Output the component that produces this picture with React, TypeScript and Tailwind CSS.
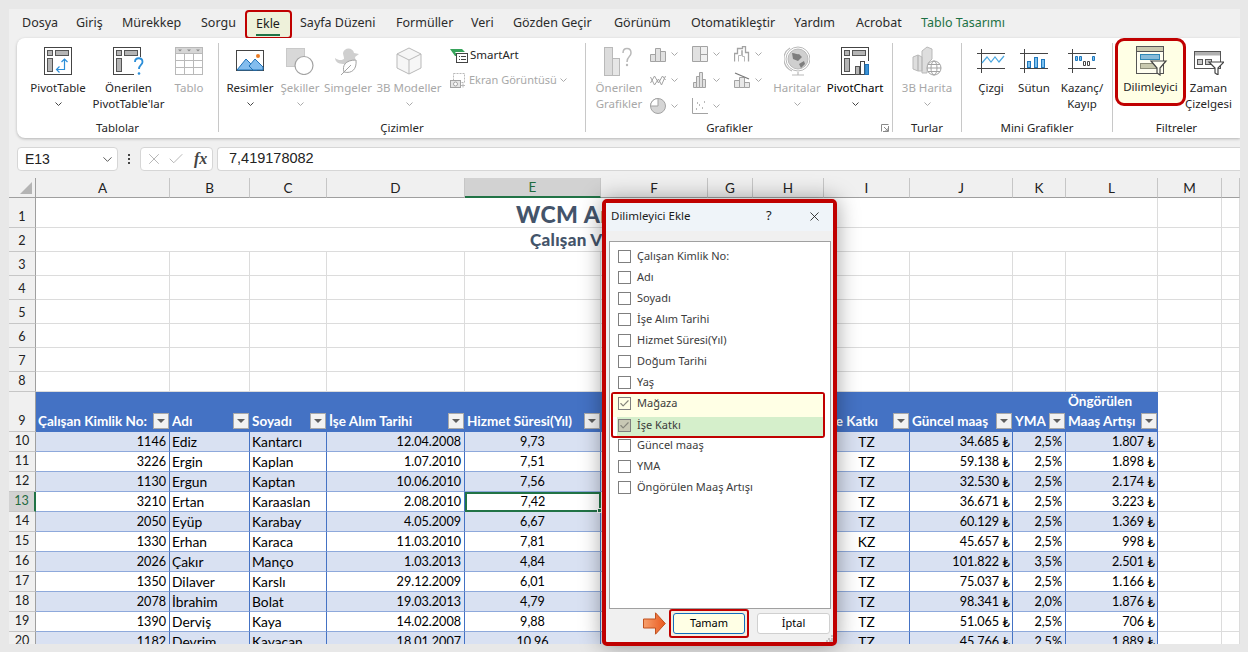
import { ReactNode } from "react"
import { Check, ChevronDown, X } from "lucide-react"

const ui = "font-['Noto_Sans',sans-serif]"
const sheet = "font-['Lato',sans-serif]"
const GRID = "grid grid-cols-[27px_134px_80px_77px_138px_136px_107px_45px_71px_86px_103px_53px_92px_64px_18px]"

const tabs = [
  { label: "Dosya", w: "w-[54px]" },
  { label: "Giriş", w: "w-[46px]" },
  { label: "Mürekkep", w: "w-[79px]" },
  { label: "Sorgu", w: "w-[44px]" },
]
const tabs2 = [
  { label: "Sayfa Düzeni", w: "w-[96px]" },
  { label: "Formüller", w: "w-[75px]" },
  { label: "Veri", w: "w-[42px]" },
  { label: "Gözden Geçir", w: "w-[101px]" },
  { label: "Görünüm", w: "w-[77px]" },
  { label: "Otomatikleştir", w: "w-[103px]" },
  { label: "Yardım", w: "w-[62px]" },
  { label: "Acrobat", w: "w-[65px]" },
]

const rows = [
  ["1146", "Ediz", "Kantarcı", "12.04.2008", "9,73", "TZ", "34.685", "2,5%", "1.807"],
  ["3226", "Ergin", "Kaplan", "1.07.2010", "7,51", "TZ", "59.138", "2,5%", "1.898"],
  ["1130", "Ergun", "Kaptan", "10.06.2010", "7,56", "TZ", "32.530", "2,5%", "2.174"],
  ["3210", "Ertan", "Karaaslan", "2.08.2010", "7,42", "TZ", "36.671", "2,5%", "3.223"],
  ["2050", "Eyüp", "Karabay", "4.05.2009", "6,67", "TZ", "60.129", "2,5%", "1.369"],
  ["1330", "Erhan", "Karaca", "11.03.2010", "7,81", "KZ", "45.657", "2,5%", "998"],
  ["2026", "Çakır", "Manço", "1.03.2013", "4,84", "TZ", "101.822", "3,5%", "2.501"],
  ["1350", "Dilaver", "Karslı", "29.12.2009", "6,01", "TZ", "75.037", "2,5%", "1.166"],
  ["2078", "İbrahim", "Bolat", "19.03.2013", "4,79", "TZ", "98.341", "2,0%", "1.876"],
  ["1390", "Derviş", "Kaya", "14.02.2008", "9,88", "TZ", "51.065", "2,5%", "706"],
  ["1182", "Devrim", "Kayacan", "18.01.2007", "10,96", "TZ", "45.766", "2,5%", "1.889"],
]

const fields = [
  "Çalışan Kimlik No:",
  "Adı",
  "Soyadı",
  "İşe Alım Tarihi",
  "Hizmet Süresi(Yıl)",
  "Doğum Tarihi",
  "Yaş",
]

const GREY = "#b9b9b9"
const GREYD = "#a3a3a3"

function Ico({ w = 28, h = 28, children }: { w?: number; h?: number; children: ReactNode }) {
  return (
    <svg width={w} height={h} viewBox={`0 0 ${w} ${h}`} fill="none" className="block shrink-0">
      {children}
    </svg>
  )
}

function Chev({ color = "#444" }: { color?: string }) {
  return (
    <svg width="7" height="4" viewBox="0 0 7 4" fill="none" className="block shrink-0">
      <path d="M.5.5l3 3 3-3" stroke={color} />
    </svg>
  )
}

function PivotBase() {
  return (
    <>
      <rect x=".5" y=".5" width="27" height="27" fill="#fff" stroke="#444" />
      <rect x="3.5" y="3.5" width="5" height="5" fill="#b5b5b5" stroke="#555" />
      <rect x="11.5" y="3.5" width="13" height="5" fill="#b5b5b5" stroke="#555" />
      <rect x="3.5" y="11.5" width="5" height="13" fill="#b5b5b5" stroke="#555" />
    </>
  )
}

const icons: Record<string, ReactNode> = {
  pivot: (
    <Ico>
      <PivotBase />
      <path d="M20.5 12v10.5H13M17.5 15l3-3 3 3M15.5 19.5l-3 3 3 3" stroke="#2b8ed8" strokeWidth="1.2" />
    </Ico>
  ),
  pivotQ: (
    <Ico w={32}>
      <PivotBase />
      <rect x="21" y="10" width="11" height="18" fill="#fff" />
      <path d="M22 15c0-5 7.500-5 7.500 0 0 3-3.500 3-3.500 7" stroke="#2b8ed8" strokeWidth="1.8" />
      <circle cx="26" cy="26.500" r="1.300" fill="#2b8ed8" />
    </Ico>
  ),
  table: (
    <Ico>
      <rect x=".5" y=".5" width="27" height="27" fill="#fff" stroke={GREY} />
      <rect x="1" y="1" width="26" height="5" fill="#d6d6d6" />
      <path d="M.5 6.500h27M.5 13.500h27M.5 20.500h27M9.500 6.500v21M18.500 6.500v21" stroke={GREY} />
      <path d="M3 2.500h4l-2 2zM12 2.500h4l-2 2zM21 2.500h4l-2 2z" fill="#8c8c8c" />
    </Ico>
  ),
  image: (
    <Ico>
      <rect x=".5" y="3.500" width="27" height="20" fill="#fff" stroke="#444" />
      <path d="M1 23l9-11 11 11z" fill="#83bdee" stroke="#1f72b8" />
      <path d="M13 19l6-7 8 8v3H17z" fill="#83bdee" stroke="#1f72b8" />
      <circle cx="22" cy="9" r="2" fill="#ea7c25" />
    </Ico>
  ),
  shapes: (
    <Ico>
      <rect x=".5" y="1.500" width="18" height="18" fill="#d8d8d8" stroke="#c9c9c9" />
      <circle cx="18" cy="18.500" r="9" fill="#fff" stroke={GREYD} strokeWidth="1.200" />
    </Ico>
  ),
  icons: (
    <Ico>
      <path d="M1 11c4 3 7 2 9 1 0-3-1-4-1-6 1-6 10-6 11 0l5 1-4 3c1 3-1 6-3 7H9c-5 0-8-3-8-6z" fill="#cfcfcf" />
      <path d="M10 25c-2-6 1-12 12-12 1 9-4 14-12 12z" fill="#fff" stroke={GREYD} />
      <path d="M7 28l10-10" stroke={GREYD} />
    </Ico>
  ),
  cube: (
    <Ico>
      <path d="M14 1l12 6v14l-12 6-12-6V7z" fill="#f6f6f6" stroke={GREY} />
      <path d="M2 7l12 6 12-6M14 13v14" stroke={GREY} />
    </Ico>
  ),
  recChart: (
    <Ico w={30} h={29}>
      <rect x=".5" y=".5" width="8" height="28" fill="#dcdcdc" stroke={GREY} />
      <rect x="8.500" y="11.500" width="7" height="17" fill="#e6e6e6" stroke={GREY} />
      <path d="M19 6c0-6 8-6 8 0 0 4-4 3-4 9" stroke={GREY} strokeWidth="1.500" />
      <circle cx="23" cy="18" r="1.200" fill={GREY} />
    </Ico>
  ),
  globe: (
    <Ico w={26} h={30}>
      <circle cx="14" cy="13" r="10" fill="#cfcfcf" stroke={GREY} />
      <path d="M8 7c4 0 5 2 7 1l3 3-4 4-5-2zM15 18l5-3 1 3-4 4z" fill="#7e7e7e" />
      <path d="M6 2a13 13 0 0 0 2 23M14 26v3M8 29h12" stroke={GREY} strokeWidth="1.200" />
      <circle cx="14" cy="13" r="12" stroke={GREY} />
    </Ico>
  ),
  pivotChart: (
    <Ico>
      <PivotBase />
      <rect x="14" y="14" width="14" height="14" fill="#fff" />
      <rect x="14.500" y="19.500" width="4" height="8" fill="#b5b5b5" stroke="#555" />
      <rect x="19.500" y="14.500" width="4" height="13" fill="#fff" stroke="#444" />
      <rect x="24" y="17.500" width="3.500" height="10" fill="#3d95d8" stroke="#1f72b8" />
    </Ico>
  ),
  map3d: (
    <Ico w={30} h={30}>
      <path d="M1 11l5-2v16l-5-2zM6 9l4 2v14l-4 0zM10 5l5-4 5 2v10l-4 4-1 10h-5z" fill="#dedede" stroke={GREY} />
      <circle cx="22" cy="22" r="7" fill="#fff" stroke={GREYD} />
      <ellipse cx="22" cy="22" rx="3" ry="7" stroke={GREYD} />
      <path d="M15 22h14M16 18.500h12M16 25.500h12" stroke={GREYD} />
    </Ico>
  ),
  line: (
    <Ico h={24}>
      <path d="M0 4.500h28M0 19.500h28M4.500 0v24" stroke="#444" />
      <path d="M5 14l5-6 4 5 4-5 4 5 5-6" stroke="#4aa7e0" strokeWidth="1.200" />
    </Ico>
  ),
  column: (
    <Ico h={24}>
      <path d="M0 4.500h28M0 19.500h28M4.500 0v24" stroke="#444" />
      <rect x="7.500" y="12.500" width="3" height="6" fill="#7cc0ee" stroke="#1f78bd" />
      <rect x="14.500" y="8.500" width="3" height="10" fill="#7cc0ee" stroke="#1f78bd" />
      <rect x="21.500" y="10.500" width="3" height="8" fill="#7cc0ee" stroke="#1f78bd" />
    </Ico>
  ),
  winloss: (
    <Ico h={24}>
      <path d="M0 4.500h28M0 19.500h28M4.500 0v24" stroke="#444" />
      <path d="M7.500 7.500h2v4h-2zM11.500 7.500h2v4h-2zM24.500 7.500h2v4h-2z" fill="#7cc0ee" stroke="#1f78bd" />
      <path d="M15.500 12.500h2v4h-2zM19.500 12.500h2v4h-2z" fill="#fff" stroke="#444" />
    </Ico>
  ),
  slicer: (
    <Ico w={32} h={30}>
      <rect x=".5" y=".5" width="27" height="27" fill="#fffef0" stroke="#555" />
      <rect x="1" y="1" width="26" height="4" fill="#c9c9ae" />
      <path d="M.5 5.500h27" stroke="#555" />
      <rect x="4.500" y="8.500" width="19" height="5" fill="#88bbd8" stroke="#2f87b5" />
      <rect x="4.500" y="17.500" width="19" height="5" fill="#c9c9ae" stroke="#8c8c78" />
      <path d="M15 15h15l-6 7v7l-3-2v-5z" fill="#fffef0" stroke="#444" strokeWidth="1.200" />
    </Ico>
  ),
  timeline: (
    <Ico w={30} h={24}>
      <rect x=".5" y=".5" width="26" height="17" fill="#fff" stroke="#555" />
      <rect x="1" y="1" width="25" height="3.500" fill="#b0b0b0" />
      <rect x="3.500" y="8.500" width="5" height="5" fill="#c8c8c8" stroke="#555" />
      <rect x="11.500" y="8.500" width="6" height="5" fill="#c8c8c8" stroke="#555" />
      <path d="M15 11h15l-6 6v7l-3-2v-5z" fill="#fff" stroke="#444" strokeWidth="1.200" />
    </Ico>
  ),
  smartart: (
    <Ico w={18} h={15}>
      <path d="M0 1h12l3 3H5l3 4-3 0z" fill="#37a35b" />
      <rect x="6.500" y="5.500" width="11" height="9" fill="#fff" stroke="#444" />
      <path d="M9 8.500h1M11 8.500h5M9 11.500h1M11 11.500h5" stroke="#444" />
    </Ico>
  ),
  screenshot: (
    <Ico w={16} h={15}>
      <rect x="3.500" y=".5" width="11" height="9" stroke={GREY} strokeDasharray="2 1" />
      <rect x=".5" y="7.500" width="10" height="7" fill="#e5e5e5" stroke={GREYD} />
      <circle cx="5.500" cy="11" r="2" fill="#fff" stroke={GREYD} />
      <path d="M11 12.500h4M13 10.500v4" stroke={GREY} />
    </Ico>
  ),
}

const small: Record<string, ReactNode> = {
  bars: (
    <Ico w={16} h={16}>
      <path d="M.5 8.500h5v7h-5zM5.500 2.500h5v13h-5zM10.500 5.500h5v10h-5z" fill="#e1e1e1" stroke={GREYD} />
    </Ico>
  ),
  lines: (
    <Ico w={16} h={16}>
      <path d="M.5 11l4-7 4 7 4-7 3 4M.5 5l4 8 4-6 3 6 4-9" stroke={GREYD} />
    </Ico>
  ),
  pie: (
    <Ico w={16} h={16}>
      <circle cx="8" cy="8" r="7.500" fill="#d5d5d5" stroke={GREYD} />
      <path d="M8 8V.5A7.500 7.500 0 0 0 .5 8z" fill="#fff" stroke={GREYD} />
    </Ico>
  ),
  tree: (
    <Ico w={16} h={16}>
      <path d="M.5.5h8v15h-8z" fill="#e1e1e1" stroke={GREYD} />
      <path d="M8.500.5h7v8h-7zM8.500 8.500h7v7h-7z" fill="#f0f0f0" stroke={GREYD} />
    </Ico>
  ),
  stat: (
    <Ico w={14} h={16}>
      <path d="M.5 10.500h3v5h-3zM3.500 4.500h3v11h-3zM6.500.5h3v15h-3zM9.500 7.500h3v8h-3z" fill="#e1e1e1" stroke={GREYD} />
    </Ico>
  ),
  scatter: (
    <Ico w={16} h={16}>
      <path d="M.5 0v15.500H16" stroke={GREYD} />
      <path d="M4 11h1M7 7h1M10 10h1M12 4h1M5 5h1" stroke={GREYD} strokeWidth="1.500" />
    </Ico>
  ),
  flow: (
    <Ico w={16} h={16}>
      <path d="M.5 15.500v-8h3v-5h5v-2h3v6h3v9" stroke={GREYD} strokeWidth="1.300" />
      <path d="M4.500 15.500v-6h3v-5h1v6h2v5" stroke={GREY} />
    </Ico>
  ),
  combo: (
    <Ico w={16} h={16}>
      <path d="M.5 8.500h5v7h-5zM5.500 5.500h5v10h-5zM10.500 10.500h5v5h-5z" fill="#e8e8e8" stroke={GREYD} />
      <path d="M1 1l14 6" stroke="#777" strokeWidth="1.300" />
    </Ico>
  ),
}

function Big({
  w,
  icon,
  lines,
  chev,
  off,
  dark,
  low,
}: {
  w: string
  icon: ReactNode
  lines: string[]
  chev?: boolean
  off?: boolean
  dark?: boolean
  low?: boolean
}) {
  return (
    <div className={`${w} flex flex-col items-center shrink-0 text-[11.5px] leading-[16px] ${off ? "text-[#a8a8a8]" : dark ? "text-black" : "text-[#262626]"}`}>
      <div className={`h-[28px] mt-[9px] mb-[5px] shrink-0 flex justify-center ${low ? "items-end" : "items-center"}`}>{icon}</div>
      {lines.map((l) => (
        <div key={l} className="whitespace-nowrap shrink-0">
          {l}
        </div>
      ))}
      {chev && (
        <div className="h-[16px] shrink-0 flex items-center">
          <Chev color={off ? "#aaa" : "#444"} />
        </div>
      )}
    </div>
  )
}

function Group({
  w,
  label,
  children,
  last,
  launcher,
}: {
  w: string
  label: string
  children: ReactNode
  last?: boolean
  launcher?: boolean
}) {
  return (
    <div className={`${w} shrink-0 flex`}>
      <div className="flex-1 min-w-0 flex flex-col">
        <div className="h-[72px] flex">{children}</div>
        <div className="h-[16px] mt-[10px] flex items-center text-[11.5px] leading-[16px] text-[#262626]">
          <div className={`flex-1 text-center ${launcher ? "pr-[8px]" : ""}`}>{label}</div>
          {launcher && (
            <svg width="8" height="8" viewBox="0 0 8 8" fill="none" className="block shrink-0 mr-[3px]">
              <path d="M.5 7.500v-7h7M3 3l4 4M7 4v3H4M7.500 2v5.500H2" stroke="#8a8a8a" />
            </svg>
          )}
        </div>
      </div>
      {!last && <div className="w-px mt-[5px] mb-[6px] bg-[#c8c8c8]" />}
    </div>
  )
}

function SmallChart({ icon }: { icon: ReactNode }) {
  return (
    <div className="h-[26px] flex items-center">
      <div className="w-[16px] flex justify-center">{icon}</div>
      <div className="ml-[5px]">
        <Chev color="#aaa" />
      </div>
    </div>
  )
}

function FilterBtn() {
  return (
    <span className="w-[16px] h-[16px] mb-[2px] shrink-0 bg-[#f2f2f2] border border-[#a9a9a9] flex items-center justify-center">
      <span className="w-0 h-0 border-x-[4px] border-x-transparent border-t-[4px] border-t-[#5f5f5f]" />
    </span>
  )
}

function RowHead({ n, h, active }: { n: number; h: string; active?: boolean }) {
  return (
    <div
      className={`${h} border-b border-[#c6c6c6] flex items-end justify-center text-[12.600px] leading-[20px] ${
        active
          ? "bg-[#d2d2d2] text-[#1f6b3f] border-r-2 border-r-[#217346]"
          : "bg-[#f0f0f0] text-[#222] border-r border-r-[#9f9f9f]"
      }`}
    >
      {n}
    </div>
  )
}

const blankLine = "border-r border-b border-[#dcdcdc] bg-white"

function Blank({ n, h }: { n: number; h: string }) {
  return (
    <>
      <RowHead n={n} h={h} />
      {Array.from({ length: 14 }).map((_, i) => (
        <div key={i} className={`${h} ${blankLine}`} />
      ))}
    </>
  )
}

function Head({ children }: { children?: ReactNode }) {
  return (
    <div className="h-[40px] bg-[#4472c4] border-b border-[#4472c4] flex items-end pl-[2px] pr-[1px] gap-[3px] text-white font-bold text-[13.500px] leading-[20px]">
      {children}
    </div>
  )
}

function HeadCell({ label, top }: { label: string; top?: string }) {
  return (
    <Head>
      <div className="flex-1 min-w-0 whitespace-nowrap overflow-hidden">
        {top && <div>{top}</div>}
        <div>{label}</div>
      </div>
      <FilterBtn />
    </Head>
  )
}

function DataRow({ r, n }: { r: string[]; n: number }) {
  const band = n % 2 === 0 ? "bg-[#d9e1f2]" : "bg-white"
  const cell = `h-[20px] pt-[1px] ${band} border-r border-r-[#4472c4] border-b border-b-[#8ea9db] flex items-center whitespace-nowrap overflow-hidden text-black`
  const word = "text-[13.800px]"
  const num = "text-[12.600px]"
  const lira = <span className="ml-[3px] text-[13.500px]">₺</span>
  return (
    <>
      <RowHead n={n} h="h-[20px]" active={n === 13} />
      <div className={`${cell} ${num} justify-end pr-[3px]`}>{r[0]}</div>
      <div className={`${cell} ${word} pl-[2px]`}>{r[1]}</div>
      <div className={`${cell} ${word} pl-[2px]`}>{r[2]}</div>
      <div className={`${cell} ${num} justify-end pr-[3px]`}>{r[3]}</div>
      {n === 13 ? (
        <div className="h-[20px] pt-[1px] bg-white border-2 border-[#217346] relative flex items-center justify-center text-[12.600px] text-black">
          {r[4]}
          <span className="absolute -right-[3px] -bottom-[3px] w-[5px] h-[5px] bg-[#217346] border border-white" />
        </div>
      ) : (
        <div className={`${cell} ${num} justify-center`}>{r[4]}</div>
      )}
      <div className={cell} />
      <div className={cell} />
      <div className={cell} />
      <div className={`${cell} ${word} justify-center`}>{r[5]}</div>
      <div className={`${cell} ${num} justify-end pr-[2px]`}>
        {r[6]}
        {lira}
      </div>
      <div className={`${cell} ${num} justify-end pr-[3px]`}>{r[7]}</div>
      <div className={`${cell} ${num} justify-end pr-[2px]`}>
        {r[8]}
        {lira}
      </div>
      <div className={`h-[20px] ${blankLine}`} />
      <div className={`h-[20px] ${blankLine}`} />
    </>
  )
}

function Box({ checked, tone }: { checked?: boolean; tone?: string }) {
  return (
    <span className={`w-[13px] h-[13px] shrink-0 border border-[#7f7f7f] flex items-center justify-center ${tone ?? "bg-white"}`}>
      {checked && <Check size={11} strokeWidth={2.5} className="text-[#85857a]" />}
    </span>
  )
}

function Field({ label }: { label: string }) {
  return (
    <div className="h-[21px] pl-[8px] flex items-center gap-[6px] text-[11px] text-[#3c3c3c] whitespace-nowrap">
      <Box />
      {label}
    </div>
  )
}

function Dialog() {
  return (
    <div className={`${ui} absolute left-[602px] top-[199px] w-[235px] h-[447px] border-[4px] border-[#c00000] rounded-[5px] bg-[#f0f0f0] shadow-[0_0_22px_rgba(0,0,0,0.38)]`}>
      <div className="h-[28px] pb-[2px] bg-[#eff4f9] flex items-center pl-[5px] text-[11.5px] text-[#1a1a1a]">
        <span className="w-[155px]">Dilimleyici Ekle</span>
        <span className="text-[13px] w-[41px]">?</span>
        <X size={15} strokeWidth={1.4} className="text-[#222]" />
      </div>
      <div className="ml-[3px] mt-[10px] w-[222px] h-[368px] border border-[#a0a0a0] bg-white pt-[4px]">
        {fields.map((f) => (
          <Field key={f} label={f} />
        ))}
        <div className="-mt-[1px] ml-[1px] w-[214px] h-[46px] border-2 border-[#c00000] rounded-[3px] text-[11px] text-[#3c3c3c]">
          <div className="h-[23px] bg-[#ffffe5] pl-[5px] pb-[4px] flex items-center gap-[6px]">
            <Box checked tone="bg-[#ffffe5]" />
            Mağaza
          </div>
          <div className="h-[19px] ml-[4px] bg-[#d5efcb] pl-[1px] pb-[3px] flex items-center gap-[6px]">
            <Box checked tone="bg-[#c8c8b4]" />
            İşe Katkı
          </div>
        </div>
        <div className="-mt-[3px]">
          <Field label="Güncel maaş" />
          <Field label="YMA" />
          <Field label="Öngörülen Maaş Artışı" />
        </div>
      </div>
      <div className="pl-[37px] flex items-start">
        <svg width="23" height="23" viewBox="0 0 23 23" className="mt-[3px] block shrink-0">
          <defs>
            <linearGradient id="arrowFill" x1="0" x2="1" y1="0" y2="0">
              <stop offset="0" stopColor="#f7a06c" />
              <stop offset="1" stopColor="#e9581f" />
            </linearGradient>
          </defs>
          <path d="M.5 7h12V.8L22.300 11.500 12.500 22.200V16H.5z" fill="url(#arrowFill)" stroke="#c0511f" />
        </svg>
        <div className="ml-[3px] w-[80px] h-[29px] border-2 border-[#c00000] rounded-[3px] bg-[#f3eee0] p-[2px]">
          <div className="h-full border border-[#0f6cbd] rounded-[3px] bg-[#ffffe5] flex items-center justify-center text-[11px] text-black">
            Tamam
          </div>
        </div>
        <div className="ml-[8px] mt-[4px] w-[73px] h-[21px] border border-[#d0d0d0] rounded-[3px] bg-white flex items-center justify-center text-[11px] text-black">
          İptal
        </div>
      </div>
      <svg width="7" height="7" viewBox="0 0 7 7" className="absolute right-0 bottom-0 block" fill="#c4c4c4">
        <path d="M5 0h2v2H5zM2 3h2v2H2zM5 3h2v2H5zM0 5h2v2H0zM3 5h2v2H3zM5 5h2v2H5z" />
      </svg>
    </div>
  )
}

export default function App() {
  const cols = ["A", "B", "C", "D", "E", "F", "G", "H", "I", "J", "K", "L", "M", ""]
  return (
    <div className="relative w-[1248px] h-[652px] overflow-hidden bg-[#e8e8e8] pt-[9px] pl-[9px] pr-[8px]">
      <div className="h-[635px] bg-[#f0f0f0] flex flex-col overflow-hidden">
        {/* tab strip */}
        <div className={`${ui} h-[29px] pl-[13px] flex items-center text-[12.500px] text-[#2b2b2b] shrink-0`}>
          {tabs.map((t) => (
            <div key={t.label} className={`${t.w} whitespace-nowrap`}>
              {t.label}
            </div>
          ))}
          <div className="w-[47px] h-[29px] mt-[2px] mr-[8px] border-2 border-[#c00000] rounded-[4px] bg-[#eef1da] pl-[9px] pt-[2px] leading-[19px]">
            <div className="w-[24px] border-b-2 border-[#217346] pb-[1px] whitespace-nowrap text-[#1c1c1c]">Ekle</div>
          </div>
          {tabs2.map((t) => (
            <div key={t.label} className={`${t.w} whitespace-nowrap`}>
              {t.label}
            </div>
          ))}
          <div className="whitespace-nowrap text-[#1d7044]">Tablo Tasarımı</div>
        </div>

        {/* ribbon */}
        <div className={`${ui} ml-[8px] h-[100px] shrink-0 bg-white rounded-l-[8px] shadow-[0_1px_3px_rgba(0,0,0,0.25)] flex`}>
          <Group w="w-[202px]" label="Tablolar">
            <div className="w-[10px]" />
            <Big w="w-[62px]" icon={icons.pivot} lines={["PivotTable"]} chev />
            <Big w="w-[79px]" icon={icons.pivotQ} lines={["Önerilen", "PivotTable'lar"]} />
            <Big w="w-[42px]" icon={icons.table} lines={["Tablo"]} off />
          </Group>
          <Group w="w-[367px]" label="Çizimler">
            <Big w="w-[62px]" icon={icons.image} lines={["Resimler"]} chev />
            <Big w="w-[38px]" icon={icons.shapes} lines={["Şekiller"]} chev off />
            <Big w="w-[58px]" icon={icons.icons} lines={["Simgeler"]} off />
            <Big w="w-[64px]" icon={icons.cube} lines={["3B Modeller"]} chev off />
            <div className="ml-[9px] pt-[8px] text-[11.500px] leading-[16px]">
              <div className="h-[18px] flex items-center gap-[2px] text-[#262626]">
                {icons.smartart}
                SmartArt
              </div>
              <div className="h-[16px] mt-[8px] flex items-center gap-[3px] text-[11px] text-[#a8a8a8] whitespace-nowrap">
                {icons.screenshot}
                Ekran Görüntüsü
                <Chev color="#aaa" />
              </div>
            </div>
          </Group>
          <Group w="w-[307px]" label="Grafikler" launcher>
            <div className="w-[10px]" />
            <Big w="w-[46px]" icon={icons.recChart} lines={["Önerilen", "Grafikler"]} off />
            <div className="w-[8px]" />
            <div className="w-[42px] pt-[3px]">
              <SmallChart icon={small.bars} />
              <SmallChart icon={small.lines} />
              <SmallChart icon={small.pie} />
            </div>
            <div className="w-[42px] pt-[3px]">
              <SmallChart icon={small.tree} />
              <SmallChart icon={small.stat} />
              <SmallChart icon={small.scatter} />
            </div>
            <div className="w-[32px] pt-[3px]">
              <SmallChart icon={small.flow} />
              <SmallChart icon={small.combo} />
            </div>
            <Big w="w-[62px]" icon={icons.globe} lines={["Haritalar"]} chev off />
            <Big w="w-[54px]" icon={icons.pivotChart} lines={["PivotChart"]} chev dark />
          </Group>
          <Group w="w-[69px]" label="Turlar">
            <Big w="w-[68px]" icon={icons.map3d} lines={["3B Harita"]} chev off />
          </Group>
          <Group w="w-[151px]" label="Mini Grafikler">
            <div className="w-[8px]" />
            <Big w="w-[42px]" icon={icons.line} lines={["Çizgi"]} />
            <Big w="w-[44px]" icon={icons.column} lines={["Sütun"]} />
            <Big w="w-[52px]" icon={icons.winloss} lines={["Kazanç/", "Kayıp"]} />
          </Group>
          <Group w="w-[127px]" label="Filtreler" last>
            <div className="ml-[2px] w-[71px] h-[68px] shrink-0 border-[3px] border-[#c00000] rounded-[9px] bg-[#ffffe5] flex flex-col items-center text-[11.500px] leading-[16px] text-[#262626]">
              <div className="h-[30px] mt-[5px] mb-[3px] ml-[2px] shrink-0">{icons.slicer}</div>
              Dilimleyici
            </div>
            <Big w="w-[45px]" icon={icons.timeline} lines={["Zaman", "Çizelgesi"]} low />
          </Group>
        </div>

        {/* formula bar */}
        <div className="h-[24px] mt-[9px] ml-[8px] shrink-0 flex items-stretch font-['Liberation_Sans',sans-serif]">
          <div className="w-[101px] bg-white border border-[#d6d6d6] rounded-[4px] flex items-center justify-between pl-[7px] pr-[2px] text-[14px] text-[#222]">
            E13
            <ChevronDown size={15} strokeWidth={1.4} className="text-[#444]" />
          </div>
          <div className="w-[22px] flex flex-col items-center justify-center gap-[2px]">
            <span className="w-[2px] h-[2px] bg-[#444]" />
            <span className="w-[2px] h-[2px] bg-[#444]" />
            <span className="w-[2px] h-[2px] bg-[#444]" />
          </div>
          <div className="w-[73px] bg-white border border-[#d6d6d6] rounded-[4px] flex items-center pl-[4px] gap-[4px]">
            <X size={18} strokeWidth={1.1} className="text-[#a8a8a8]" />
            <Check size={18} strokeWidth={1.1} className="text-[#a8a8a8]" />
            <span className="ml-[5px] font-['Liberation_Serif',serif] italic font-bold text-[16px] text-[#444]">fx</span>
          </div>
          <div className="ml-[4px] flex-1 bg-white border border-[#d6d6d6] border-r-0 rounded-l-[4px] flex items-center pl-[11px] text-[14.500px] text-[#222]">
            7,419178082
          </div>
        </div>

        {/* sheet */}
        <div className={`${sheet} mt-[7px] flex-1 min-h-0 overflow-hidden`}>
          <div className={GRID}>
            <div className="h-[20px] bg-[#f0f0f0] border-b border-r border-[#9f9f9f] flex items-end justify-end pr-[3px] pb-[3px]">
              <span className="w-0 h-0 border-l-[12px] border-l-transparent border-b-[12px] border-b-[#b4b4b4]" />
            </div>
            {cols.map((c, i) => (
              <div
                key={i}
                className={`h-[20px] pt-[1px] flex items-center justify-center text-[13.500px] border-r border-[#c6c6c6] ${
                  c === "E"
                    ? "bg-[#d2d2d2] text-[#1f6b3f] border-b-2 border-b-[#217346]"
                    : "bg-[#f0f0f0] text-[#222] border-b border-b-[#9f9f9f]"
                }`}
              >
                {c}
              </div>
            ))}

            <RowHead n={1} h="h-[30px]" />
            <div className="col-span-12 h-[30px] pt-[3px] bg-white border-b border-r border-[#dcdcdc] flex items-center pl-[480px] text-[23px] font-black tracking-[0.5px] text-[#44546a] whitespace-nowrap overflow-hidden">
              WCM An
            </div>
            <div className={`h-[30px] ${blankLine}`} />
            <div className={`h-[30px] ${blankLine}`} />

            <RowHead n={2} h="h-[24px]" />
            <div className="col-span-12 h-[24px] pt-[1px] bg-white border-b border-r border-[#dcdcdc] flex items-center pl-[494px] text-[17px] font-black tracking-[0.3px] text-[#44546a] whitespace-nowrap overflow-hidden">
              Çalışan V
            </div>
            <div className={`h-[24px] ${blankLine}`} />
            <div className={`h-[24px] ${blankLine}`} />

            <Blank n={3} h="h-[24px]" />
            <Blank n={4} h="h-[24px]" />
            <Blank n={5} h="h-[24px]" />
            <Blank n={6} h="h-[24px]" />
            <Blank n={7} h="h-[24px]" />
            <Blank n={8} h="h-[20px]" />

            <RowHead n={9} h="h-[40px]" />
            <HeadCell label="Çalışan Kimlik No:" />
            <HeadCell label="Adı" />
            <HeadCell label="Soyadı" />
            <HeadCell label="İşe Alım Tarihi" />
            <HeadCell label="Hizmet Süresi(Yıl)" />
            <Head />
            <Head />
            <Head />
            <HeadCell label="İşe Katkı" />
            <HeadCell label="Güncel maaş" />
            <HeadCell label="YMA" />
            <HeadCell top="Öngörülen" label="Maaş Artışı" />
            <div className={`h-[40px] ${blankLine}`} />
            <div className={`h-[40px] ${blankLine}`} />

            {rows.map((r, i) => (
              <DataRow key={r[0]} r={r} n={i + 10} />
            ))}
          </div>
        </div>
      </div>
      <Dialog />
    </div>
  )
}
